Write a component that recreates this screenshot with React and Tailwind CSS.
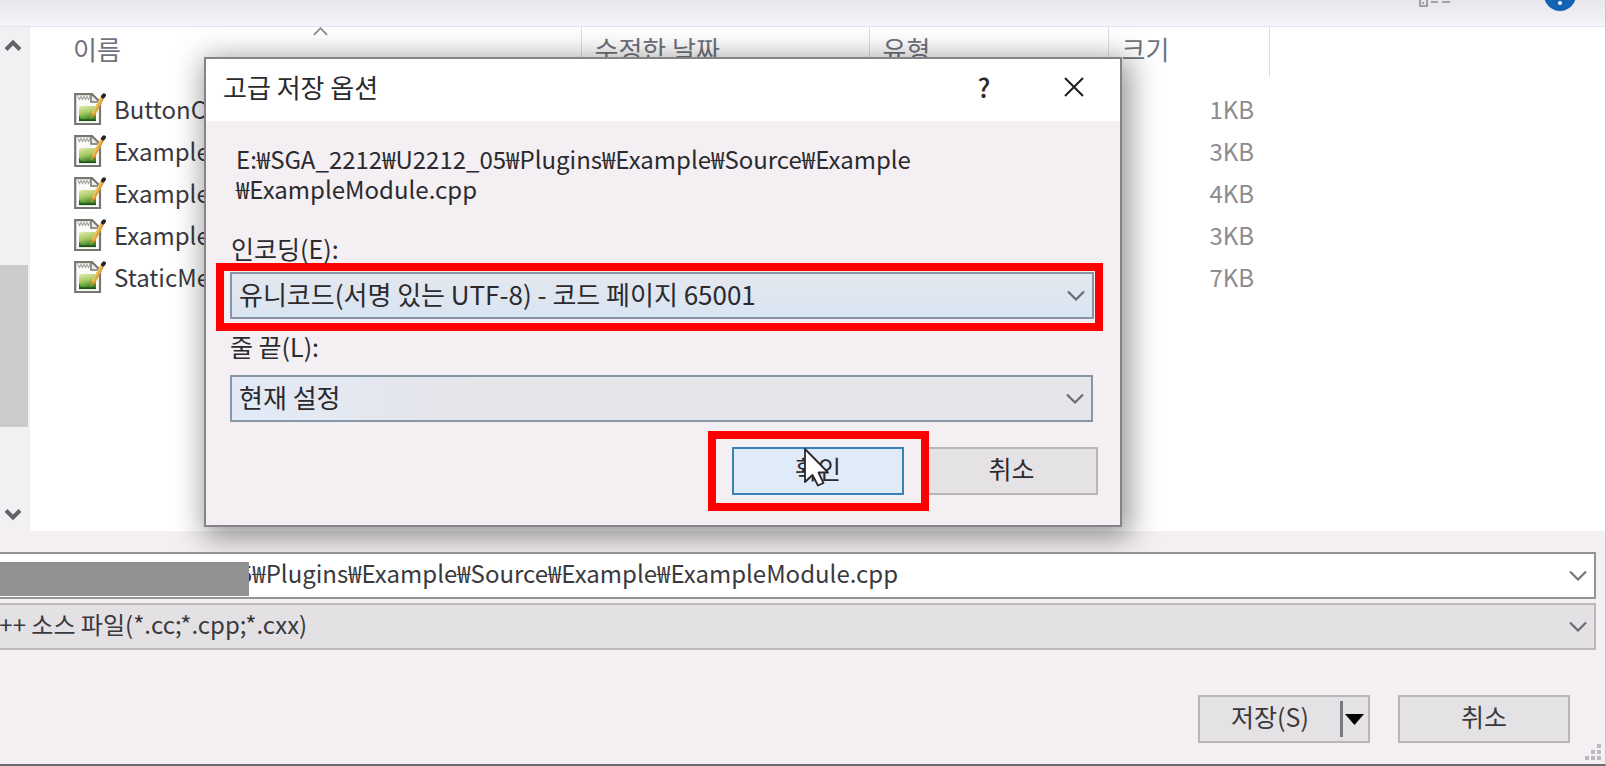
import React from "react";

const files = [
  { name: "ButtonCommand.cpp", size: "1KB" },
  { name: "ExampleActor.cpp", size: "3KB" },
  { name: "ExampleDetail.cpp", size: "4KB" },
  { name: "ExampleModule.cpp", size: "3KB" },
  { name: "StaticMeshDetail.cpp", size: "7KB" },
];

function FileIcon() {
  return (
    <svg className="block size-8 shrink-0" viewBox="0 0 32 32" aria-hidden="true">
      <defs>
        <linearGradient id="leaf" x1="0" y1="0" x2="0.3" y2="1">
          <stop offset="0" stopColor="#e2ecb4" />
          <stop offset="0.55" stopColor="#a9ca62" />
          <stop offset="1" stopColor="#3f8a2c" />
        </linearGradient>
      </defs>
      <path d="M1.200 1.200H18l8 8V31H1.200Z" fill="#fbfbfa" stroke="#77776f" strokeWidth="2.200" />
      <path d="M4 3.500l1.500 3 1.500-3 1.500 3 1.500-3 1.500 3 1.500-3 1.500 3 1.500-3" fill="none" stroke="#a5a5a7" strokeWidth="1.200" />
      <path d="M17 2v7h7" fill="#ededed" stroke="#77776f" strokeWidth="1.600" />
      <path d="M5 14q4-2 9-1h8v14H5Z" fill="url(#leaf)" />
      <path d="M5 27.200h17" stroke="#22521c" strokeWidth="1.800" />
      <path d="M5 23l3 4h-3Z" fill="#2d6b22" />
      <path d="M28.500 4.500L19 22" stroke="#e2a53a" strokeWidth="3.800" />
      <path d="M27.500 4L18.500 20.500" stroke="#f3cf74" strokeWidth="1.200" />
      <path d="M17.400 20.400l3.400 1.800-4.300 4Z" fill="#d98a2b" />
      <path d="M29 3.500l1-1.200" stroke="#2a2226" strokeWidth="4" strokeLinecap="round" />
    </svg>
  );
}

function Chevron({ className }) {
  return (
    <svg className={className} viewBox="0 0 18 11" fill="none" stroke="currentColor" strokeWidth="2.2" aria-hidden="true">
      <path d="M1 1.5l8 8 8-8" />
    </svg>
  );
}

function Combo({ id, value, label, className }) {
  return (
    <div className="relative">
      <select id={id} aria-label={label} defaultValue={value} className={className}>
        <option>{value}</option>
      </select>
      <Chevron className="pointer-events-none absolute right-[9px] top-[18px] h-[11px] w-[18px] text-[#6b6b72]" />
    </div>
  );
}

const headCell = "border-l border-[#dedce6] pb-[6px] pl-[13px] text-left font-normal";

function SaveOptions() {
  return (
    <section
      role="dialog"
      aria-labelledby="options-title"
      className="absolute left-[204px] top-[57px] w-[918px] border-2 border-[#858388] bg-[#f3eff3] text-[#2b2a2e] shadow-[4px_6px_28px_4px_rgba(0,0,0,0.42)]"
    >
      <header className="flex h-[62px] items-center bg-white pb-[6px] pl-[17px] pr-[34px]">
        <h1 id="options-title" className="flex-1 text-[26px] leading-8">고급 저장 옵션</h1>
        <button type="button" aria-label="도움말" className="w-6 text-[26px] font-medium leading-8">?</button>
        <button type="button" aria-label="닫기" className="ml-[66px] flex size-6 items-center justify-center">
          <svg className="size-5" viewBox="0 0 20 20" stroke="#1d1c1f" strokeWidth="2" aria-hidden="true">
            <path d="M1 1l18 18M19 1L1 19" />
          </svg>
        </button>
      </header>
      <div className="pb-[14px] pl-6 pr-[27px] pt-[23px]">
        <p className="pl-[6px] text-[24px] leading-[30px]">
          E:₩SGA_2212₩U2212_05₩Plugins₩Example₩Source₩Example
          <br />
          ₩ExampleModule.cpp
        </p>
        <label htmlFor="encoding" className="mt-[30px] block h-8 pl-px text-[25px] leading-7">인코딩(E):</label>
        <div className="-ml-[14px] -mr-[10px] -mt-[3px] border-8 border-[#ff0000] pb-1 pl-[6px] pr-px pt-px">
          <Combo
            id="encoding"
            value="유니코드(서명 있는 UTF-8) - 코드 페이지 65001"
            className="block h-[47px] w-full appearance-none border-2 border-[#8794a8] bg-linear-to-b from-[#e4e7ee] to-[#d9e5f2] pb-[5px] pl-[7px] text-[26px]"
          />
        </div>
        <label htmlFor="line-end" className="mt-px block h-8 text-[25px] leading-7">줄 끝(L):</label>
        <div className="mt-[11px]">
          <Combo
            id="line-end"
            value="현재 설정"
            className="block h-[47px] w-full appearance-none border-2 border-[#8797a5] bg-linear-to-r from-[#e2eaf7] to-[#e6e5e9] to-30% pb-[5px] pl-[7px] text-[26px]"
          />
        </div>
        <div className="mt-[9px] flex items-center justify-end">
          <div className="relative z-10 border-8 border-[#ff0000] py-2 pl-4 pr-[17px]">
            <button type="button" className="block h-12 w-[172px] border-2 border-[#3a82b8] bg-[#e0ebfa] pb-[6px] text-[25px] leading-8">확인</button>
            <svg className="absolute left-[87px] top-[8px] h-[40px] w-[28px]" viewBox="0 0 28 40" aria-hidden="true">
              <path d="M2 2V35L9.500 28L15 38.500L20.500 36L15.500 25.500H25Z" fill="#fff" stroke="#29292e" strokeWidth="1.800" strokeLinejoin="round" />
            </svg>
          </div>
          <button type="button" className="-ml-1 -mr-[5px] h-12 w-[173px] border-2 border-[#b9b6b9] bg-[#e5e2e5] pb-[6px] text-[25px] leading-8">취소</button>
        </div>
      </div>
    </section>
  );
}

export default function App() {
  return (
    <main className="relative flex min-h-screen flex-col overflow-hidden border-b-2 border-r border-b-[#6e6c70] border-r-[#c9c6ca] bg-[#f3eff3] font-['Noto_Sans_CJK_KR',sans-serif] text-[#3a393d]">
      <div className="flex h-[27px] justify-end border-b border-[#e6e3ea] bg-linear-to-b from-[#e8e6ea] to-[#f6f4fa] pr-[29px]">
        <svg className="h-[7px] w-[34px]" viewBox="0 0 34 7" fill="none" stroke="#8b898e" strokeWidth="1.5" aria-hidden="true">
          <path d="M2 0V6H9V0M5 2v2M13 2h7M24 2h8" />
        </svg>
        <svg className="ml-[92px] h-3 w-8" viewBox="0 0 32 12" aria-hidden="true">
          <circle cx="16" cy="-5" r="16" fill="#1164b4" />
          <circle cx="16" cy="3" r="2" fill="#fff" />
        </svg>
      </div>

      <div className="flex h-[504px]">
        <div className="flex w-[30px] shrink-0 flex-col bg-[#f3f0f4] text-[#646266]">
          <svg className="ml-1 mt-3 h-[12px] w-[18px] shrink-0" viewBox="0 0 18 12" fill="none" stroke="currentColor" strokeWidth="4" aria-hidden="true">
            <path d="M2 10.500l7-7 7 7" />
          </svg>
          <div className="mt-[214px] h-[162px] w-7 shrink-0 bg-[#cdcace]" />
          <svg className="mb-[10px] ml-1 mt-auto h-[12px] w-[18px] shrink-0" viewBox="0 0 18 12" fill="none" stroke="currentColor" strokeWidth="4" aria-hidden="true">
            <path d="M2 1.500l7 7 7-7" />
          </svg>
        </div>
        <div className="relative min-w-0 flex-1 bg-white">
          <Chevron className="absolute left-[283px] top-0 h-[9px] w-[15px] rotate-180 text-[#8b898d]" />
          <table className="w-full table-fixed border-collapse text-[24px] leading-8">
            <colgroup>
              <col className="w-[551px]" />
              <col className="w-[288px]" />
              <col className="w-[239px]" />
              <col className="w-[161px]" />
              <col />
            </colgroup>
            <thead>
              <tr className="h-[50px] text-[26px] text-[#70727e]">
                <th className="pb-[6px] pl-[43px] text-left font-normal">이름</th>
                <th className={headCell}>수정한 날짜</th>
                <th className={headCell}>유형</th>
                <th className={headCell}>크기</th>
                <th className={headCell} aria-label="여백" />
              </tr>
            </thead>
            <tbody>
              <tr className="h-3" aria-hidden="true"><td colSpan={5} /></tr>
              {files.map((f) => (
                <tr key={f.name} className="h-[42px]">
                  <td className="pb-[2px] pl-11">
                    <div className="flex items-center gap-2">
                      <FileIcon />
                      <span className="truncate">{f.name}</span>
                    </div>
                  </td>
                  <td />
                  <td />
                  <td className="pb-[2px] pr-[15px] text-right text-[#8d8b8e]">{f.size}</td>
                  <td />
                </tr>
              ))}
            </tbody>
          </table>
        </div>
      </div>

      <form className="relative z-20 mt-[21px] flex flex-col pr-[9px]" onSubmit={(e) => e.preventDefault()}>
        <div className="relative">
          <input
            aria-label="파일 이름"
            defaultValue="5₩Plugins₩Example₩Source₩Example₩ExampleModule.cpp"
            className="block h-[47px] w-full border-2 border-l-0 border-[#969397] bg-white pb-[6px] pl-[239px] text-[24px]"
          />
          <div className="absolute left-0 top-[10px] h-[34px] w-[249px] bg-[#919191]" />
          <Chevron className="pointer-events-none absolute right-[9px] top-[18px] h-[11px] w-[18px] text-[#77757a]" />
        </div>
        <div className="-ml-[18px] mt-1">
          <Combo
            id="kind"
            label="파일 형식"
            value="C++ 소스 파일(*.cc;*.cpp;*.cxx)"
            className="block h-[47px] w-full appearance-none border-2 border-[#bbb8bc] bg-[#e4e1e4] pb-[5px] text-[24px]"
          />
        </div>
        <div className="mt-[45px] flex justify-end gap-7 pr-[26px] text-[25px] leading-8">
          <div className="flex h-12 w-[172px] items-center border-2 border-[#b9b6b9] bg-[#e5e2e5]">
            <button type="submit" className="h-full flex-1 pb-[6px]">저장(S)</button>
            <button type="button" aria-label="저장 옵션" className="flex h-9 w-[28px] items-center border-l-[3px] border-[#7b797d] pl-[2px]">
              <svg className="h-[11px] w-[19px]" viewBox="0 0 19 11" aria-hidden="true"><path d="M0 0h19l-9.500 11Z" /></svg>
            </button>
          </div>
          <button type="button" className="h-12 w-[172px] border-2 border-[#b9b6b9] bg-[#e5e2e5] pb-[6px]">취소</button>
        </div>
      </form>
      <svg className="absolute bottom-1 right-1 size-[17px]" viewBox="0 0 17 17" fill="#bdbabf" aria-hidden="true">
        <path d="M13 1h4v4h-4ZM13 7h4v4h-4ZM13 13h4v4h-4ZM7 7h4v4h-4ZM7 13h4v4h-4ZM1 13h4v4h-4Z" />
      </svg>
      <SaveOptions />
    </main>
  );
}
